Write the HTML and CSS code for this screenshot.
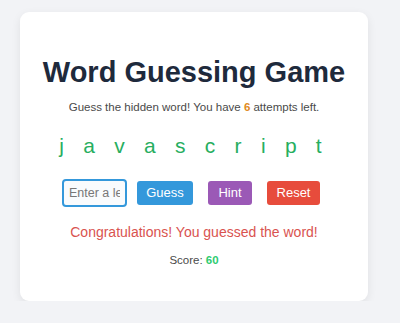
FILE: index.html
```html
<!DOCTYPE html>
<html lang="en">
<head>
<meta charset="utf-8">
<title>Word Guessing Game</title>
<link rel="stylesheet" href="styles.css">
</head>
<body>
<div class="card">
  <h1 class="title">Word Guessing Game</h1>
  <p class="subtitle">Guess the hidden word! You have <span class="attempts">6</span> attempts left.</p>
  <div class="word">
    <span>j</span><span>a</span><span>v</span><span>a</span><span>s</span><span>c</span><span>r</span><span>i</span><span>p</span><span>t</span>
  </div>
  <div class="controls">
    <input class="guess-input" type="text" placeholder="Enter a letter">
    <button class="btn btn-guess">Guess</button>
    <button class="btn btn-hint">Hint</button>
    <button class="btn btn-reset">Reset</button>
  </div>
  <p class="message">Congratulations! You guessed the word!</p>
  <p class="score">Score: <span class="score-value">60</span></p>
</div>
</body>
</html>
```
FILE: styles.css
```css
html, body {
  margin: 0;
  padding: 0;
}
body {
  background: #f2f3f6;
  font-family: "Liberation Sans", Arial, sans-serif;
  padding: 12px 32px 0 20px;
}
.card {
  background: #ffffff;
  border-radius: 9px;
  box-shadow: 0 3px 10px rgba(0, 0, 0, 0.08);
  padding: 43px 0 33px;
  display: flex;
  flex-direction: column;
  align-items: center;
  text-align: center;
}
.title {
  margin: 0;
  font-size: 29px;
  line-height: 34px;
  font-weight: bold;
  color: #1e2a3c;
}
.subtitle {
  margin: 10px 0 0;
  font-size: 11.5px;
  line-height: 16px;
  color: #4a4a4a;
}
.attempts {
  color: #e08a1e;
  font-weight: bold;
}
.word {
  margin-top: 18px;
  display: flex;
  gap: 19.3px;
  padding-right: 7px;
  font-size: 21px;
  line-height: 26px;
  color: #27ae60;
}
.controls {
  margin-top: 20px;
  display: flex;
  align-items: center;
  padding-right: 6px;
  height: 28px;
}
.guess-input {
  box-sizing: border-box;
  width: 65px;
  height: 28px;
  border: 2px solid #3498db;
  border-radius: 4px;
  background: #f9fbfd;
  padding: 0 5px;
  font-family: "Liberation Sans", Arial, sans-serif;
  font-size: 12.5px;
  color: #333;
  outline: none;
}
.guess-input::placeholder {
  color: #777;
}
.btn {
  height: 24px;
  border: none;
  border-radius: 3px;
  padding: 0 8px;
  color: #ffffff;
  font-family: "Liberation Sans", Arial, sans-serif;
  font-size: 13px;
  line-height: 24px;
  cursor: pointer;
}
.btn-guess {
  margin-left: 10px;
  background: #3498db;
  width: 56px;
}
.btn-hint {
  margin-left: 15px;
  background: #9b59b6;
  width: 44px;
}
.btn-reset {
  margin-left: 15px;
  background: #e74c3c;
  width: 53px;
}
.message {
  margin: 16px 0 0;
  font-size: 14px;
  line-height: 18px;
  color: #d9534f;
}
.score {
  margin: 11px 0 0;
  font-size: 11.5px;
  line-height: 16px;
  color: #4a4a4a;
}
.score-value {
  color: #2ecc71;
  font-weight: bold;
}
```
